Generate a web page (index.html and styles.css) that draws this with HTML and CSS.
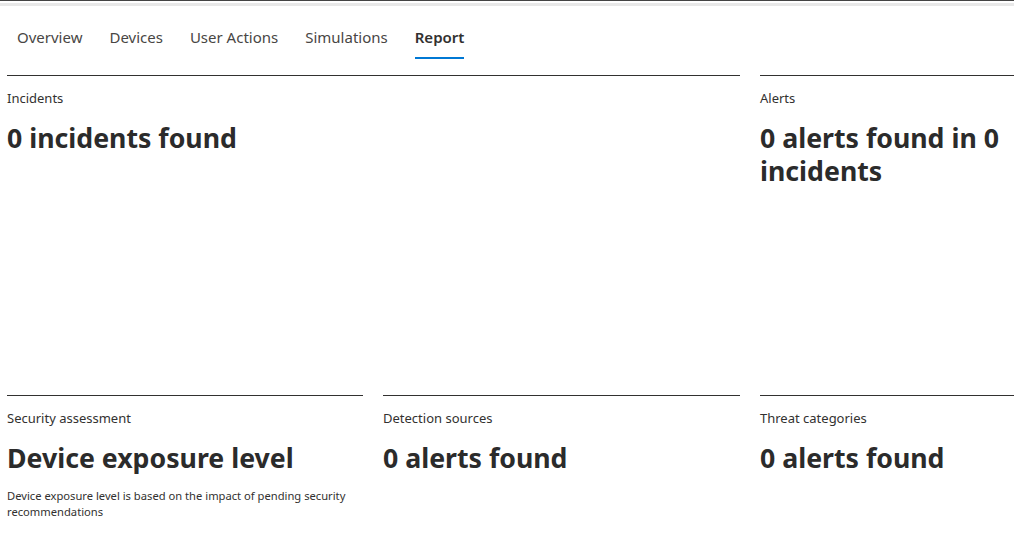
FILE: index.html
```html
<!DOCTYPE html>
<html lang="en">
<head>
<meta charset="utf-8">
<title>Report</title>
<link rel="stylesheet" href="styles.css">
</head>
<body>
<div class="topbar"></div>
<nav class="tabs">
  <a class="tab">Overview</a>
  <a class="tab">Devices</a>
  <a class="tab">User Actions</a>
  <a class="tab">Simulations</a>
  <a class="tab active">Report</a>
</nav>
<main class="grid">
  <section class="card span2">
    <h3 class="label">Incidents</h3>
    <h2 class="headline">0 incidents found</h2>
  </section>
  <section class="card">
    <h3 class="label">Alerts</h3>
    <h2 class="headline">0 alerts found in 0 incidents</h2>
  </section>
  <section class="card">
    <h3 class="label">Security assessment</h3>
    <h2 class="headline">Device exposure level</h2>
    <p class="desc">Device exposure level is based on the impact of pending security recommendations</p>
  </section>
  <section class="card">
    <h3 class="label">Detection sources</h3>
    <h2 class="headline">0 alerts found</h2>
  </section>
  <section class="card">
    <h3 class="label">Threat categories</h3>
    <h2 class="headline">0 alerts found</h2>
  </section>
</main>
</body>
</html>
```

FILE: styles.css
```css
html, body {
  margin: 0;
  padding: 0;
  background: #fff;
  overflow: hidden;
}
body {
  font-family: "Noto Sans", "Open Sans", sans-serif;
  color: #323130;
  width: 1014px;
  height: 534px;
}
.topbar {
  height: 1px;
  background: #444;
  border-bottom: 2px solid #fff;
  box-shadow: 0 3px 0 0 #e8e8e8;
}
.tabs {
  display: flex;
  gap: 27px;
  padding: 23px 0 0 17px;
  margin-top: 1px;
  height: 71px;
  box-sizing: border-box;
}
.tab {
  font-size: 15px;
  line-height: 20px;
  color: #484644;
  height: 32px;
  box-sizing: border-box;
  cursor: pointer;
}
.tab.active {
  font-weight: 600;
  color: #323130;
  border-bottom: 2px solid #0078d4;
}
.grid {
  display: grid;
  grid-template-columns: 356px 357px 1fr;
  grid-template-rows: 320px auto;
  column-gap: 20px;
  margin-left: 7px;
}
.card {
  border-top: 1px solid #323130;
  padding-top: 13px;
  min-width: 0;
}
.span2 {
  grid-column: span 2;
}
.label {
  margin: 0;
  font-size: 13px;
  line-height: 18px;
  font-weight: 400;
  color: #323130;
}
.headline {
  margin: 14px 0 0;
  font-size: 26.7px;
  line-height: 33px;
  font-weight: 700;
  color: #2b2b2b;
}
.desc {
  margin: 14px 0 0;
  font-size: 11.2px;
  line-height: 16px;
  color: #323130;
  max-width: 350px;
}
```
